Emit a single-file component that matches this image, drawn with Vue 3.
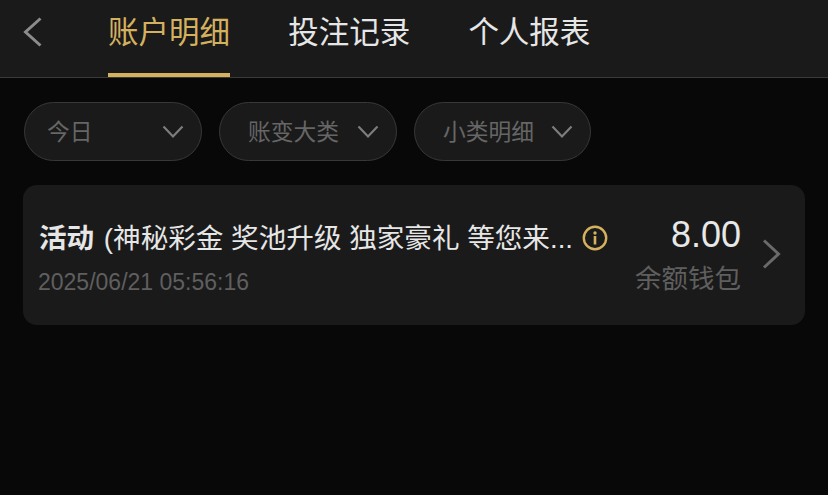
<template>
  <div class="page">
    <header class="top">
      <button class="back">
        <svg width="20" height="30" viewBox="0 0 20 30">
          <path d="M17.500 1.500 L2.500 15 L17.500 28.500" fill="none" stroke="#8c8c8c" stroke-width="3" />
        </svg>
      </button>
      <nav class="tabs">
        <div v-for="(tab, i) in tabs" :key="tab" class="tab" :class="{ active: i === 0 }">{{ tab }}</div>
      </nav>
    </header>

    <div class="filters">
      <div v-for="f in filters" :key="f.label" class="pill" :class="f.cls">
        <span>{{ f.label }}</span>
        <svg width="22" height="14" viewBox="0 0 22 14">
          <path d="M1.500 1.500 L11 11.500 L20.500 1.500" fill="none" stroke="#7d7d7d" stroke-width="2.200" />
        </svg>
      </div>
    </div>

    <div class="card">
      <div class="info">
        <div class="title-row">
          <span class="title"><b>活动</b> (神秘彩金 奖池升级 独家豪礼 等您来...</span>
          <svg class="tip" width="26" height="26" viewBox="0 0 26 26">
            <circle cx="13" cy="13" r="11.200" fill="none" stroke="#d4b15f" stroke-width="2.400" />
            <circle cx="13" cy="8" r="1.700" fill="#d4b15f" />
            <rect x="11.700" y="11" width="2.600" height="8.500" fill="#d4b15f" />
          </svg>
        </div>
        <div class="date">2025/06/21 05:56:16</div>
      </div>
      <div class="money">
        <div class="amount">8.00</div>
        <div class="wallet">余额钱包</div>
      </div>
      <svg class="arrow" width="19" height="30" viewBox="0 0 19 30">
        <path d="M2 1.500 L16.500 15 L2 28.500" fill="none" stroke="#6a6a6a" stroke-width="3" />
      </svg>
    </div>
  </div>
</template>

<script setup>
const tabs = ['账户明细', '投注记录', '个人报表']
const filters = [
  { label: '今日', cls: 'short' },
  { label: '账变大类', cls: '' },
  { label: '小类明细', cls: 'last' },
]
</script>

<style>
html,
body {
  margin: 0;
  background: #080808;
}
</style>

<style scoped>
.page {
  width: 828px;
  height: 495px;
  overflow: hidden;
  background: #080808;
  font-family: "Liberation Sans", "Noto Sans CJK SC", sans-serif;
}
.top {
  display: flex;
  height: 78px;
  box-sizing: border-box;
  background: #1a1a1a;
  border-bottom: 1px solid #3a3a3a;
  padding-left: 23px;
}
.back {
  width: 85px;
  padding: 17px 0 0;
  border: 0;
  background: none;
  text-align: left;
  align-self: flex-start;
}
.tabs {
  display: flex;
  gap: 58.200px;
}
.tab {
  height: 77px;
  box-sizing: border-box;
  padding-top: 12px;
  font-size: 30.500px;
  line-height: 40px;
  color: #e6e6e6;
  white-space: nowrap;
}
.tab.active {
  color: #d4b15f;
  border-bottom: 4px solid #d4b15f;
}
.filters {
  display: flex;
  gap: 17px;
  padding: 24px 0 0 24px;
}
.pill {
  display: flex;
  align-items: center;
  justify-content: space-between;
  width: 178px;
  height: 59px;
  box-sizing: border-box;
  padding: 0 17px 0 28px;
  border: 1px solid #383838;
  border-radius: 30px;
  background: #1a1a1a;
  font-size: 22.750px;
  color: #666;
}
.pill.short {
  padding-left: 22px;
}
.pill.last {
  width: 177px;
}
.pill span {
  padding-bottom: 3px;
}
.card {
  display: flex;
  align-items: center;
  width: 782px;
  height: 140px;
  box-sizing: border-box;
  margin: 24px 0 0 23px;
  padding: 0 24px 0 16px;
  border-radius: 14px;
  background: #1a1a1a;
}
.info {
  flex: 1;
  margin-top: 7px;
}
.title-row {
  display: flex;
  align-items: center;
  gap: 9px;
}
.title {
  font-size: 27.600px;
  line-height: 36px;
  color: #e6e6e6;
  white-space: nowrap;
}
.title b {
  margin-right: 2px;
}
.tip {
  flex-shrink: 0;
  margin-top: -2px;
}
.date {
  margin-top: 11px;
  margin-left: -1px;
  font-size: 23px;
  line-height: 28px;
  color: #5f5f5f;
}
.money {
  text-align: right;
  margin-right: 21px;
  margin-top: 3px;
}
.amount {
  font-size: 36px;
  line-height: 42px;
  color: #e8e8e8;
}
.wallet {
  margin-top: 3px;
  font-size: 26.500px;
  line-height: 40px;
  color: #5f5f5f;
}
.arrow {
  flex-shrink: 0;
  margin-top: -2px;
}
</style>
